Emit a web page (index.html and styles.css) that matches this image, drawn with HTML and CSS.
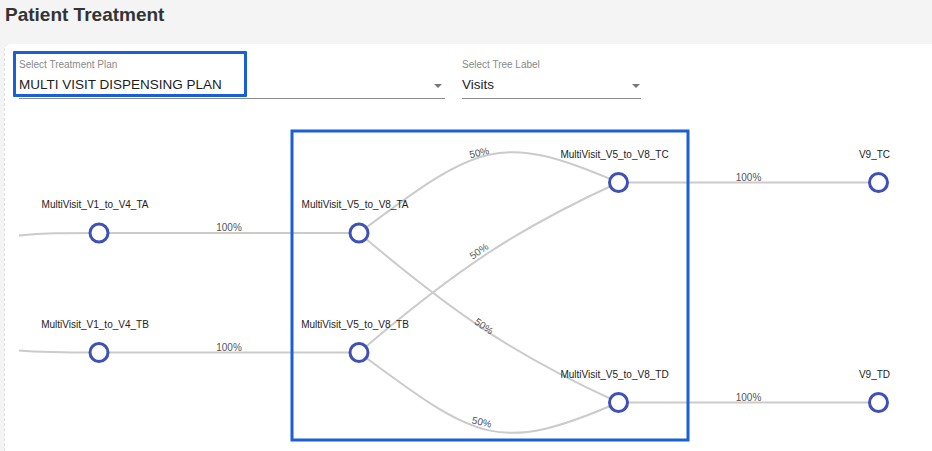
FILE: index.html
```html
<!DOCTYPE html>
<html lang="en">
<head>
  <meta charset="UTF-8" />
  <meta name="viewport" content="width=device-width, initial-scale=1" />
  <title>Patient Treatment</title>
  <link rel="stylesheet" href="styles.css">
</head>
<body>
  <header class="page-header">
    <h1>Patient Treatment</h1>
  </header>

  <main class="card">
    <div class="filters">
      <div class="field field-plan">
        <span class="field-label">Select Treatment Plan</span>
        <div class="field-value">
          <span>MULTI VISIT DISPENSING PLAN</span>
          <span class="caret"></span>
        </div>
        <span class="highlight"></span>
      </div>
      <div class="field field-tree">
        <span class="field-label">Select Tree Label</span>
        <div class="field-value">
          <span>Visits</span>
          <span class="caret"></span>
        </div>
      </div>
    </div>

    <!-- viewBox uses page coordinates so node positions read directly -->
    <svg class="tree" width="927" height="341" viewBox="5 110 927 341">
      <g class="links">
        <path class="link" d="M19,235.5 C45,233 60,233 99,233" />
        <path class="link" d="M19,350.5 C45,352.5 60,352.5 99,352.5" />
        <path class="link" d="M99,233 L359,233" />
        <path class="link" d="M99,352.5 L359,352.5" />
        <path class="link" d="M359,233 C479,143 499,131 618.5,182.5" />
        <path class="link" d="M359,233 C459,318 519,357 618.5,402.5" />
        <path class="link" d="M359,352.5 C459,267 519,228 618.5,182.5" />
        <path class="link" d="M359,352.5 C479,442 499,454 618.5,402.5" />
        <path class="link" d="M618.5,182.5 L878.5,182.5" />
        <path class="link" d="M618.5,402.5 L878.5,402.5" />
      </g>

      <g class="link-labels">
        <text x="229" y="231">100%</text>
        <text x="229" y="350.5">100%</text>
        <text x="480" y="156" transform="rotate(-13 480 156)">50%</text>
        <text x="481" y="254" transform="rotate(-35 481 254)">50%</text>
        <text x="482" y="329" transform="rotate(35 482 329)">50%</text>
        <text x="481" y="425.5" transform="rotate(13 481 425.5)">50%</text>
        <text x="748.5" y="180.5">100%</text>
        <text x="748.5" y="400.5">100%</text>
      </g>

      <g class="nodes">
        <g class="node" transform="translate(99 233)">
          <text class="node-label" x="-4" y="-25">MultiVisit_V1_to_V4_TA</text>
          <circle r="9" />
        </g>
        <g class="node" transform="translate(99 352.5)">
          <text class="node-label" x="-4" y="-25">MultiVisit_V1_to_V4_TB</text>
          <circle r="9" />
        </g>
        <g class="node" transform="translate(359 233)">
          <text class="node-label" x="-4" y="-25">MultiVisit_V5_to_V8_TA</text>
          <circle r="9" />
        </g>
        <g class="node" transform="translate(359 352.5)">
          <text class="node-label" x="-4" y="-25">MultiVisit_V5_to_V8_TB</text>
          <circle r="9" />
        </g>
        <g class="node" transform="translate(618.5 182.5)">
          <text class="node-label" x="-4" y="-25">MultiVisit_V5_to_V8_TC</text>
          <circle r="9" />
        </g>
        <g class="node" transform="translate(618.5 402.5)">
          <text class="node-label" x="-4" y="-25">MultiVisit_V5_to_V8_TD</text>
          <circle r="9" />
        </g>
        <g class="node" transform="translate(878.5 182.5)">
          <text class="node-label" x="-4" y="-25">V9_TC</text>
          <circle r="9" />
        </g>
        <g class="node" transform="translate(878.5 402.5)">
          <text class="node-label" x="-4" y="-25">V9_TD</text>
          <circle r="9" />
        </g>
      </g>

      <rect class="focus-box" x="292" y="131" width="396" height="309" />
    </svg>
  </main>
</body>
</html>
```

FILE: styles.css
```css
body {
  margin: 0;
  background: #f4f4f4;
  font-family: 'Liberation Sans', Arial, Helvetica, sans-serif;
  color: #222;
  overflow: hidden;
}

.page-header {
  height: 44px;
  padding: 3px 5px 0;
  box-sizing: border-box;
}
.page-header h1 {
  margin: 0;
  font-size: 19px;
  line-height: 24px;
  font-weight: 700;
  color: #333;
}

/* Karte mit Filtern und Baum */
.card {
  margin-left: 4px;
  height: calc(100vh - 44px);
  background: #fff;
  border-left: 1px dashed #dedede;
  border-top-left-radius: 6px;
}

.filters {
  display: flex;
  gap: 17px;
  padding-left: 14px;
}

.field {
  position: relative;
  padding: 15px 0 4px;
  border-bottom: 1px solid #8c8c8c;
}
.field-plan { width: 426px; }
.field-tree { width: 179px; }

.field-label {
  display: block;
  height: 12px;
  font-size: 10px;
  line-height: 12px;
  color: #8a8a8a;
}

.field-value {
  display: flex;
  justify-content: space-between;
  align-items: center;
  margin-top: 5px;
  height: 18px;
  font-size: 13.5px;
  line-height: 18px;
  color: #1c1c1c;
}

.caret {
  width: 0;
  height: 0;
  margin: 2px 3px 0 0;
  border-left: 4.5px solid transparent;
  border-right: 4.5px solid transparent;
  border-top: 4px solid #777;
}
.field-tree .caret { margin-right: 1px; }

/* Markierung um die Auswahl */
.highlight {
  position: absolute;
  left: -6px;
  top: 7px;
  width: 234px;
  height: 46px;
  box-sizing: border-box;
  border: 3px solid #1a5fd6;
  border-radius: 1px;
}

.tree {
  display: block;
  margin-top: 11px;
  font-family: 'Liberation Sans', Arial, Helvetica, sans-serif;
}

.link {
  fill: none;
  stroke: #cbcbcb;
  stroke-width: 2;
}

.link-labels text {
  font-size: 10px;
  fill: #555;
  text-anchor: middle;
}

.node circle {
  fill: #fff;
  stroke: #3f51b5;
  stroke-width: 3;
}
.node-label {
  font-size: 10px;
  fill: #222;
  text-anchor: middle;
}

.focus-box {
  fill: none;
  stroke: #1a5fd6;
  stroke-width: 3;
}
```
